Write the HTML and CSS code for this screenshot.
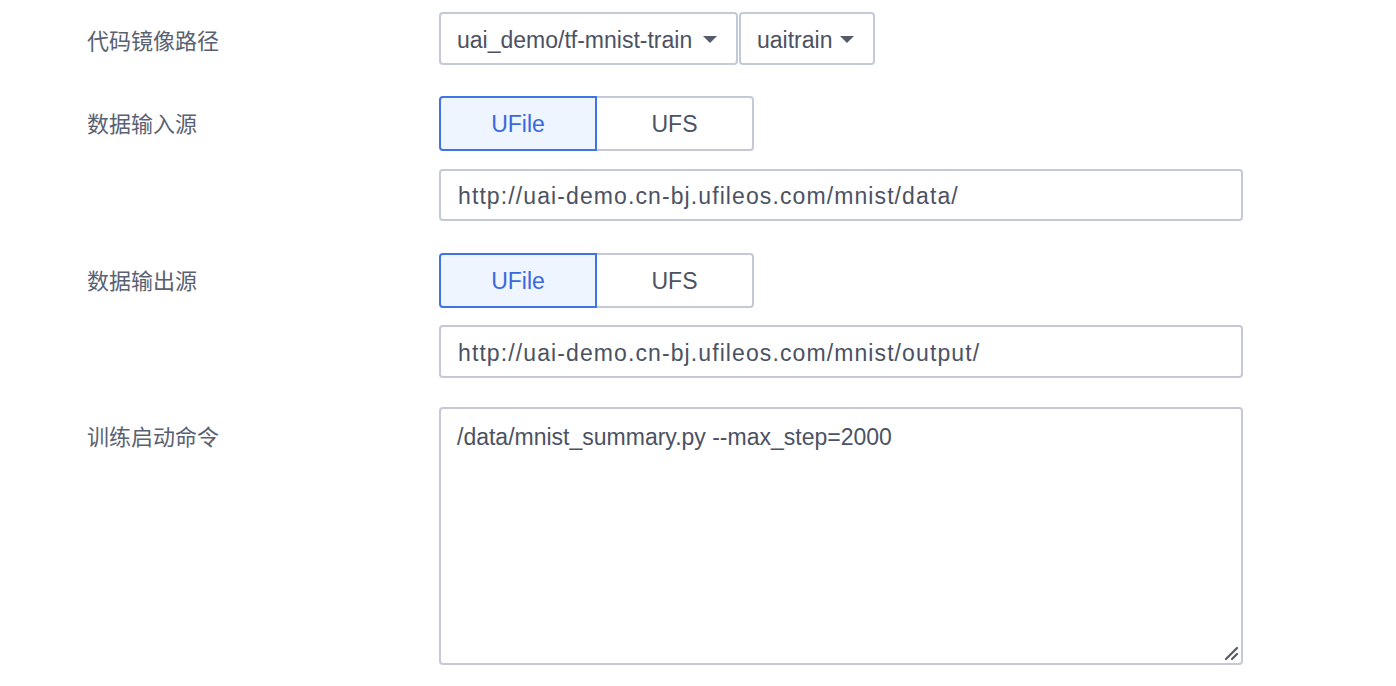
FILE: index.html
```html
<!DOCTYPE html>
<html lang="zh-CN">
<head>
<meta charset="utf-8">
<title>训练任务</title>
<link rel="stylesheet" href="styles.css">
</head>
<body>
<form class="form">
  <div class="row row-image">
    <div class="label label-image">代码镜像路径</div>
    <div class="field">
      <div class="selects">
        <div class="select select-wide"><span class="select-text">uai_demo/tf-mnist-train</span><span class="caret"></span></div>
        <div class="select select-narrow"><span class="select-text">uaitrain</span><span class="caret"></span></div>
      </div>
    </div>
  </div>
  <div class="row row-source">
    <div class="label">数据输入源</div>
    <div class="field">
      <div class="toggle">
        <div class="toggle-btn active">UFile</div>
        <div class="toggle-btn">UFS</div>
      </div>
      <div class="input">http://uai-demo.cn-bj.ufileos.com/mnist/data/</div>
    </div>
  </div>
  <div class="row row-source row-source-last">
    <div class="label">数据输出源</div>
    <div class="field">
      <div class="toggle">
        <div class="toggle-btn active">UFile</div>
        <div class="toggle-btn">UFS</div>
      </div>
      <div class="input">http://uai-demo.cn-bj.ufileos.com/mnist/output/</div>
    </div>
  </div>
  <div class="row row-cmd">
    <div class="label label-cmd">训练启动命令</div>
    <div class="field">
      <div class="textarea">
        <span class="textarea-text">/data/mnist_summary.py --max_step=2000</span>
        <svg class="grip" width="16" height="16" viewBox="0 0 16 16"><path d="M14 3 L3 14 M14 9 L9 14" stroke="#555a63" stroke-width="2.2" stroke-linecap="round" fill="none"/></svg>
      </div>
    </div>
  </div>
</form>
</body>
</html>
```
FILE: styles.css
```css
html, body {
  margin: 0;
  padding: 0;
  background: #ffffff;
}
body {
  font-family: "Liberation Sans", "Noto Sans CJK SC", Arial, sans-serif;
  color: #4b5263;
}
.form {
  display: flex;
  flex-direction: column;
  padding: 12px 0 0 87px;
}
.row {
  display: flex;
  align-items: flex-start;
}
.row-image { margin-bottom: 31px; }
.row-source { margin-bottom: 32px; }
.row-source-last { margin-bottom: 29px; }
.label {
  width: 352px;
  flex: none;
  font-family: "Noto Sans CJK SC", sans-serif;
  font-size: 22px;
  line-height: 53px;
  color: #5a6172;
}
.label-image { padding-top: 2px; line-height: 51px; }
.label-cmd { line-height: 56px; }
.field {
  display: flex;
  flex-direction: column;
  gap: 18px;
}
.row-source-last .field { gap: 17px; }
.selects {
  display: flex;
  gap: 1px;
}
.select {
  box-sizing: border-box;
  height: 53px;
  border: 2px solid #c4c9d8;
  border-radius: 4px;
  display: flex;
  align-items: center;
  padding: 3px 30px 0 16px;
  position: relative;
  font-size: 23px;
  color: #4b5263;
}
.select-wide { width: 299px; }
.select-narrow { width: 136px; }
.caret {
  position: absolute;
  right: 19px;
  top: 22px;
  width: 0;
  height: 0;
  border-left: 7px solid transparent;
  border-right: 7px solid transparent;
  border-top: 7px solid #555b68;
}
.toggle {
  display: flex;
}
.toggle-btn {
  box-sizing: border-box;
  width: 158px;
  height: 55px;
  border: 2px solid #c4c9d8;
  display: flex;
  align-items: center;
  justify-content: center;
  padding-top: 2px;
  font-size: 23px;
  color: #4b5263;
  background: #fff;
}
.toggle-btn:first-child {
  border-radius: 4px 0 0 4px;
}
.toggle-btn:last-child {
  border-radius: 0 4px 4px 0;
  border-left: none;
  width: 157px;
}
.toggle-btn.active {
  border-color: #3f73e6;
  background: #eff5ff;
  color: #3a68de;
}
.input {
  box-sizing: border-box;
  width: 804px;
  height: 52px;
  border: 2px solid #c4c9d8;
  border-radius: 4px;
  display: flex;
  align-items: center;
  padding: 3px 17px 0;
  font-size: 23px;
  letter-spacing: 1.1px;
  color: #4b5263;
}
.row-source-last .input { height: 53px; }
.textarea {
  box-sizing: border-box;
  width: 804px;
  height: 258px;
  border: 2px solid #c4c9d8;
  border-radius: 4px;
  padding: 14px 16px;
  font-size: 23px;
  line-height: 28px;
  color: #4b5263;
  position: relative;
}
.grip {
  position: absolute;
  right: 2px;
  bottom: 2px;
}
```
